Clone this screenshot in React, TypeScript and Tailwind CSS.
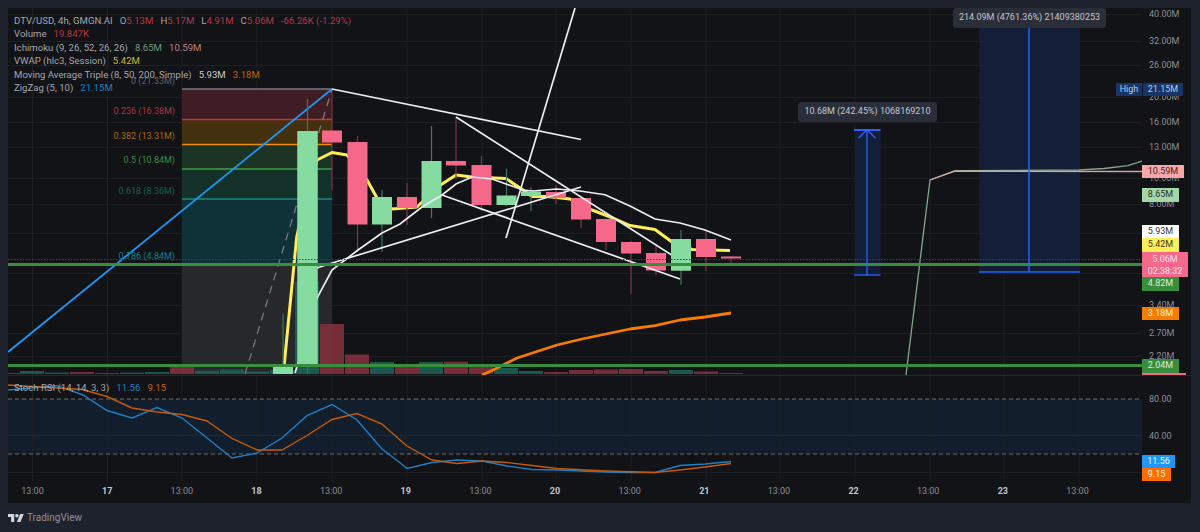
const GREEN = '#86dba0'
const RED = '#f6688a'

// [x, bodyTop, bodyBottom, wickTop, wickBottom, up]
const CANDLES: [number, number, number, number, number, boolean][] = [
  [283, 367, 374, 314, 374, true],
  [307.5, 131, 367, 99, 374, true],
  [332, 130.5, 142.5, 130, 143, false],
  [357.5, 142, 224.5, 136, 252, false],
  [382, 197, 224.5, 190, 252, true],
  [407, 197, 208, 183, 225, false],
  [431.5, 161, 208, 126, 218, true],
  [456, 161, 165.5, 117, 179, false],
  [481.5, 165, 205, 156, 211, false],
  [506.5, 195.5, 205, 169, 206, true],
  [531, 191.5, 196, 187, 211, true],
  [556, 192, 198, 185, 204, false],
  [581, 198, 219.5, 198, 228, false],
  [606, 219, 242, 219, 250, false],
  [631, 242, 253.5, 241, 294, false],
  [656, 253, 270.5, 246, 275, false],
  [681, 239, 270.5, 230, 285, true],
  [706, 239, 257, 231, 271, false],
  [731, 256.5, 258.5, 256, 263, false],
]

// [x, top, up]
const VOLUME: [number, number, boolean][] = [
  [-4, 373, false], [20, 371, true], [45, 372.5, true], [70, 372, false], [95, 373, false],
  [120, 372.5, true], [145, 372, true], [170, 365.7, false], [195, 370.7, true], [220, 369.5, true],
  [245, 371.5, true], [270, 370, true], [295, 282, true], [320, 324, false], [345, 354.5, false],
  [370, 362, true], [395, 366, false], [419, 362, true], [444, 361.7, false], [469, 364, false],
  [494, 368, true], [519, 371, true], [544, 372, false], [569, 370, false], [594, 369.5, false],
  [619, 369, false], [644, 371, false], [669, 370, true], [694, 371.5, false], [719, 373, false],
]

const FIB_BANDS = [
  { top: 89, bottom: 119.5, fill: '#3f1d24' },
  { top: 119.5, bottom: 144.5, fill: '#43300f' },
  { top: 144.5, bottom: 169, fill: '#1b3423' },
  { top: 169, bottom: 199, fill: '#14312a' },
  { top: 199, bottom: 264, fill: '#0f3238' },
  { top: 264, bottom: 374, fill: '#27282c' },
]

const FIB_LINES = [
  { y: 89, color: '#787b86' },
  { y: 119.5, color: '#c8323f' },
  { y: 144.5, color: '#f08a00' },
  { y: 169, color: '#43a047' },
  { y: 199, color: '#1b8a78' },
]

const FIB_LABELS = [
  { y: 81, text: '0 (21.33M)', color: 'text-[#5d6068]' },
  { y: 111, text: '0.236 (16.38M)', color: 'text-[#b0303d]' },
  { y: 136, text: '0.382 (13.31M)', color: 'text-[#a8690f]' },
  { y: 160, text: '0.5 (10.84M)', color: 'text-[#3f8a43]' },
  { y: 191, text: '0.618 (8.36M)', color: 'text-[#14604f]' },
  { y: 255.5, text: '0.786 (4.84M)', color: 'text-[#0f7f8f]' },
]

const PRICE_GRID = [14, 41, 65, 97, 122, 147, 178, 204, 233, 273, 305, 333, 356]
const TIME_GRID = [32.5, 107.5, 182, 257, 332, 407, 482, 556, 631, 706, 780, 855, 930, 1004, 1079]

const PRICES = [
  { y: 14, text: '40.00M' }, { y: 41, text: '32.00M' }, { y: 65, text: '26.00M' }, { y: 97, text: '20.00M' },
  { y: 122, text: '16.00M' }, { y: 147, text: '13.00M' }, { y: 178, text: '10.00M' }, { y: 204, text: '8.00M' },
  { y: 305, text: '3.40M' }, { y: 333, text: '2.70M' }, { y: 356, text: '2.20M' },
]

const PRICE_TAGS = [
  { top: 165, height: 13, width: 42, text: '10.59M', cls: 'bg-[#f7a6ab] text-[#3a2a2c]' },
  { top: 188, height: 14, width: 37, text: '8.65M', cls: 'bg-[#a5d6a7] text-[#26332a]' },
  { top: 225, height: 13, width: 37, text: '5.93M', cls: 'bg-white text-[#333640]' },
  { top: 238, height: 14, width: 37, text: '5.42M', cls: 'bg-[#ffee58] text-[#3a3820]' },
  { top: 277, height: 14, width: 37, text: '4.82M', cls: 'bg-[#388e3c] text-[#dcefdc]' },
  { top: 307, height: 13, width: 37, text: '3.18M', cls: 'bg-[#f57c00] text-[#fff0dd]' },
  { top: 359, height: 14, width: 37, text: '2.04M', cls: 'bg-[#388e3c] text-[#dcefdc]' },
]

const VWAP = '283.5,372 296.7,237 307,190 317,160 332,152.5 347,155 367,180 377,198 392,209 417,207 421,203 442,184 456,175 472,177 506,178.5 523,190 532,196.5 547,196.5 570,199 592,210 613,218 630,225.5 655,229.5 672,242 692,249.5 730,250.5'
const MA_FAST = '295,373 299,360 317,298 332,270 358,250 382,233 400,224 422,207 442,195 456,184 472,177 492,179 523,190 533,191 556.7,189 580,191 605,194.7 630,206 655,219 680,223 705,230 731,240'
const MA_SLOW = '482,375 493,370 517,358 557,345 582,339 630,329 655,325.7 680,320 705,317 731,313'
const RSI_K = '8,390 57,385.7 83,395 107,410.5 132,418 157,407.5 182,418 207,438 232,458 257,453 282,438 307,415.7 332,404.5 357,420 382,449 400,462.7 407,468.5 432,462.5 457,460 482,461 507,466 532,469.5 557,470 606,472 631,472.5 655,472.5 680,465.5 705,464 731,461.5'
const RSI_D = '8,385 57,388 82,389.5 107,396.5 132,408 157,412 182,414.5 207,421 232,438.5 257,450 282,450 307,435.5 332,419.5 357,413.5 382,424 400,440 407,446 432,460 457,463.5 482,461 507,462.5 532,465.5 557,468.5 606,471 655,472.5 680,470 705,467 731,463.5'

const TIMES = ['13:00', '17', '13:00', '18', '13:00', '19', '13:00', '20', '13:00', '21', '13:00', '22', '13:00', '23', '13:00']

function Legend() {
  return (
    <div className="absolute left-[6px] top-[6px] flex flex-col whitespace-nowrap text-[9.6px] leading-[13.4px] text-[#a3a6af]">
      <div className="flex gap-[7px]">
        <span>DTV/USD, 4h, GMGN.AI</span>
        <span>O<span className="text-[#b2384a]">5.13M</span></span>
        <span>H<span className="text-[#b2384a]">5.17M</span></span>
        <span>L<span className="text-[#b2384a]">4.91M</span></span>
        <span>C<span className="text-[#b2384a]">5.06M</span></span>
        <span className="text-[#b2384a]">-66.26K (-1.29%)</span>
      </div>
      <div className="flex gap-[7px]">
        <span>Volume</span>
        <span className="text-[#b2384a]">19.847K</span>
      </div>
      <div className="flex gap-[7px]">
        <span>Ichimoku (9, 26, 52, 26, 26)</span>
        <span className="text-[#6f9c78]">8.65M</span>
        <span className="text-[#b8858a]">10.59M</span>
      </div>
      <div className="flex gap-[7px]">
        <span>VWAP (hlc3, Session)</span>
        <span className="text-[#c9b93f]">5.42M</span>
      </div>
      <div className="flex gap-[7px]">
        <span>Moving Average Triple (8, 50, 200, Simple)</span>
        <span className="text-[#c9cad0]">5.93M</span>
        <span className="text-[#c26508]">3.18M</span>
      </div>
      <div className="flex gap-[7px]">
        <span>ZigZag (5, 10)</span>
        <span className="text-[#1f7cc4]">21.15M</span>
      </div>
    </div>
  )
}

function MainDrawing() {
  return (
    <svg className="absolute inset-0 h-full w-full" viewBox="8 8 1134 367">
      {TIME_GRID.map((x) => <line key={x} x1={x} x2={x} y1={8} y2={375} stroke="#1d1f23" />)}
      {PRICE_GRID.map((y) => <line key={y} x1={8} x2={1142} y1={y + 0.5} y2={y + 0.5} stroke="#1d1f23" />)}

      {FIB_BANDS.map((b) => <rect key={b.top} x={182} y={b.top} width={150} height={b.bottom - b.top} fill={b.fill} />)}
      {FIB_LINES.map((l) => <line key={l.y} x1={182} x2={332} y1={l.y} y2={l.y} stroke={l.color} strokeWidth={1.5} />)}
      <line x1={332} x2={332} y1={89} y2={190} stroke="#8a3646" strokeWidth={1} />

      {/* measure boxes */}
      <rect x={855} y={130} width={25.5} height={145} fill="#131f38" />
      <rect x={979} y={8} width={101} height={264} fill="#131f38" />

      {VOLUME.map(([x, top, up]) => (
        <rect key={x} x={x} y={top} width={24} height={374 - top} fill={up ? '#1c5d53' : '#7b2f3a'} opacity={0.95} />
      ))}

      <line x1={245} y1={374} x2={332} y2={89} stroke="#77797f" strokeWidth={1.3} strokeDasharray="8 6" />
      <line x1={8} y1={352} x2={332} y2={89} stroke="#2196f3" strokeWidth={1.8} />

      <polyline points="906,375 930,180 955,170.7 1079,170 1104,168.5 1128,165.7 1142,161" fill="none" stroke="#7fa98a" strokeWidth={1.3} />
      <polyline points="930,180 955,171.2 1142,171.5" fill="none" stroke="#d3a5a6" strokeWidth={1.3} />

      <polyline points={VWAP} fill="none" stroke="#ffee58" strokeWidth={3} strokeLinejoin="round" />

      {CANDLES.map(([x, top, bottom, wickTop, wickBottom, up]) => (
        <g key={x}>
          <line x1={x} x2={x} y1={wickTop} y2={wickBottom} stroke={up ? '#3d7a58' : '#80364a'} strokeWidth={1.2} />
          <rect x={x - 10} y={top} width={20} height={bottom - top} fill={up ? GREEN : RED} />
        </g>
      ))}

      <polyline points={MA_SLOW} fill="none" stroke="#f57c00" strokeWidth={2.8} strokeLinejoin="round" />

      <g stroke="#eceff1" strokeWidth={1.7} fill="none">
        <polyline points={MA_FAST} />
        <polyline points="317,268 332,263 581,187" />
        <line x1={332} y1={89} x2={581} y2={139.5} />
        <line x1={456} y1={117} x2={681} y2={261} />
        <line x1={442} y1={195} x2={680} y2={279} />
        <line x1={506} y1={238} x2={575} y2={8} />
      </g>

      {/* the two candles that lie over the drawn lines */}
      <rect x={297.5} y={131} width={20} height={236} fill={GREEN} />
      <rect x={671} y={239} width={20} height={31.5} fill={GREEN} />

      <line x1={8} x2={1142} y1={259.5} y2={259.5} stroke="#6b2d3a" strokeDasharray="1.5 1.5" />
      <line x1={8} x2={1142} y1={264.5} y2={264.5} stroke="#388e3c" strokeWidth={3} />
      <line x1={8} x2={1142} y1={365.5} y2={365.5} stroke="#388e3c" strokeWidth={3} />

      <g stroke="#2962ff" fill="none">
        <line x1={854} x2={880.5} y1={130} y2={130} strokeWidth={2} />
        <line x1={854} x2={880.5} y1={275} y2={275} strokeWidth={1.3} />
        <line x1={867} x2={867} y1={130} y2={275} strokeWidth={1.3} />
        <polyline points="858.5,138 867,130 875.5,138" strokeWidth={1.3} />
        <line x1={979} x2={1080} y1={272} y2={272} strokeWidth={1.3} />
        <line x1={1029} x2={1029} y1={28} y2={272} strokeWidth={1.5} />
      </g>
    </svg>
  )
}

function MeasureTip({ className, text }: { className: string; text: string }) {
  return (
    <div className={`absolute flex h-[20px] items-center justify-center whitespace-nowrap rounded-[3px] bg-[#2a2e39] text-[9px] text-[#c3c6ce] ${className}`}>
      {text}
    </div>
  )
}

function PriceAxis() {
  return (
    <div className="relative w-[49px] text-[9px] text-[#8b8e96]">
      {PRICES.map((p) => (
        <span key={p.text} className="absolute left-[7px] leading-[14px]" style={{ top: p.y - 15 }}>{p.text}</span>
      ))}

      <div className="absolute left-[-26px] top-[75px] flex h-[13px] items-center">
        <span className="flex h-[13px] w-[26px] items-center justify-center bg-[#173566] text-[#b7cbe8]">High</span>
        <span className="ml-[1px] flex h-[13px] w-[40px] items-center justify-center bg-[#173566] text-[#b7cbe8]">21.15M</span>
      </div>

      {PRICE_TAGS.map((t) => (
        <div
          key={t.text}
          className={`absolute left-0 flex items-center justify-center ${t.cls}`}
          style={{ top: t.top - 8, height: t.height, width: t.width }}
        >
          {t.text}
        </div>
      ))}

      <div className="absolute left-0 top-[244px] flex h-[25px] w-[46px] flex-col items-center justify-center bg-[#f6688a] leading-[12px] text-[#fde3ea]">
        <span>5.06M</span>
        <span>02:38:32</span>
      </div>
      <div className="absolute bottom-0 left-0 h-[2px] w-[44px] bg-[#f6688a]" />
    </div>
  )
}

function StochRsi() {
  return (
    <div className="flex h-[105px]">
      <div className="relative w-[1134px]">
        <svg className="absolute inset-0 h-full w-full" viewBox="8 376 1134 105">
          <rect x={8} y={399} width={1134} height={55} fill="#121e2b" />
          {TIME_GRID.map((x) => <line key={x} x1={x} x2={x} y1={376} y2={481} stroke="#1d1f23" />)}
          <line x1={8} x2={1142} y1={435.5} y2={435.5} stroke="#1b2a36" />
          <line x1={8} x2={1142} y1={472.5} y2={472.5} stroke="#1d1f23" />
          <line x1={8} x2={1142} y1={399} y2={399} stroke="#6a6d75" strokeDasharray="4 3" />
          <line x1={8} x2={1142} y1={454} y2={454} stroke="#6a6d75" strokeDasharray="4 3" />
          <polyline points={RSI_K} fill="none" stroke="#1f7fc6" strokeWidth={1.4} />
          <polyline points={RSI_D} fill="none" stroke="#c65a0c" strokeWidth={1.4} />
        </svg>
        <div className="absolute left-[6px] top-[5px] flex gap-[7px] text-[9.6px] leading-[13.4px] text-[#a3a6af]">
          <span>Stoch RSI (14, 14, 3, 3)</span>
          <span className="text-[#1f7cc4]">11.56</span>
          <span className="text-[#c26508]">9.15</span>
        </div>
      </div>
      <div className="relative w-[49px] text-[9px] text-[#8b8e96]">
        <span className="absolute left-[7px] top-[16px] leading-[14px]">80.00</span>
        <span className="absolute left-[7px] top-[53px] leading-[14px]">40.00</span>
        <div className="absolute left-0 top-[79px] flex h-[13px] w-[33px] items-center justify-center bg-[#2196f3] text-[#e6f3fe]">11.56</div>
        <div className="absolute left-0 top-[92px] flex h-[13px] w-[29px] items-center justify-center bg-[#ff6d00] text-[#fff0e3]">9.15</div>
      </div>
    </div>
  )
}

export default function App() {
  return (
    <div className="flex h-[532px] w-[1200px] flex-col bg-[#1e222d] pl-2 pt-2 font-['Roboto',sans-serif]">
      <div className="flex h-[495px] w-[1183px] flex-col overflow-hidden bg-[#121316]">
        <div className="flex h-[367px]">
          <div className="relative w-[1134px]">
            <MainDrawing />
            <Legend />
            {FIB_LABELS.map((f) => (
              <span
                key={f.text}
                className={`absolute right-[967px] whitespace-nowrap text-[9px] leading-[14px] ${f.color}`}
                style={{ top: f.y - 15 }}
              >
                {f.text}
              </span>
            ))}
            <MeasureTip className="left-[790px] top-[94px] w-[139px]" text="10.68M (242.45%) 1068169210" />
            <MeasureTip className="left-[945px] top-0 w-[153px]" text="214.09M (4761.36%) 21409380253" />
          </div>
          <PriceAxis />
        </div>
        <div className="h-px bg-[#24272f]" />
        <StochRsi />
        <div className="ml-[-12.8px] flex h-[22px] items-center text-[9px] text-[#8b8e96]">
          {TIMES.map((t, i) => (
            <span key={i} className={`w-[74.65px] shrink-0 text-center ${t.length === 2 ? 'font-bold text-[#c3c6ce]' : ''}`}>{t}</span>
          ))}
        </div>
      </div>
      <div className="flex h-[29px] items-center gap-[3px] text-[10px] text-[#8f929c]">
        <svg viewBox="0 4 36 18" className="h-[8px] w-[16px]" fill="#d1d4dc">
          <path d="M14 22H7V11H0V4h14v18zM28 22h-8l7.5-18h8L28 22z" />
          <circle cx="20" cy="8" r="4" />
        </svg>
        <span>TradingView</span>
      </div>
    </div>
  )
}
